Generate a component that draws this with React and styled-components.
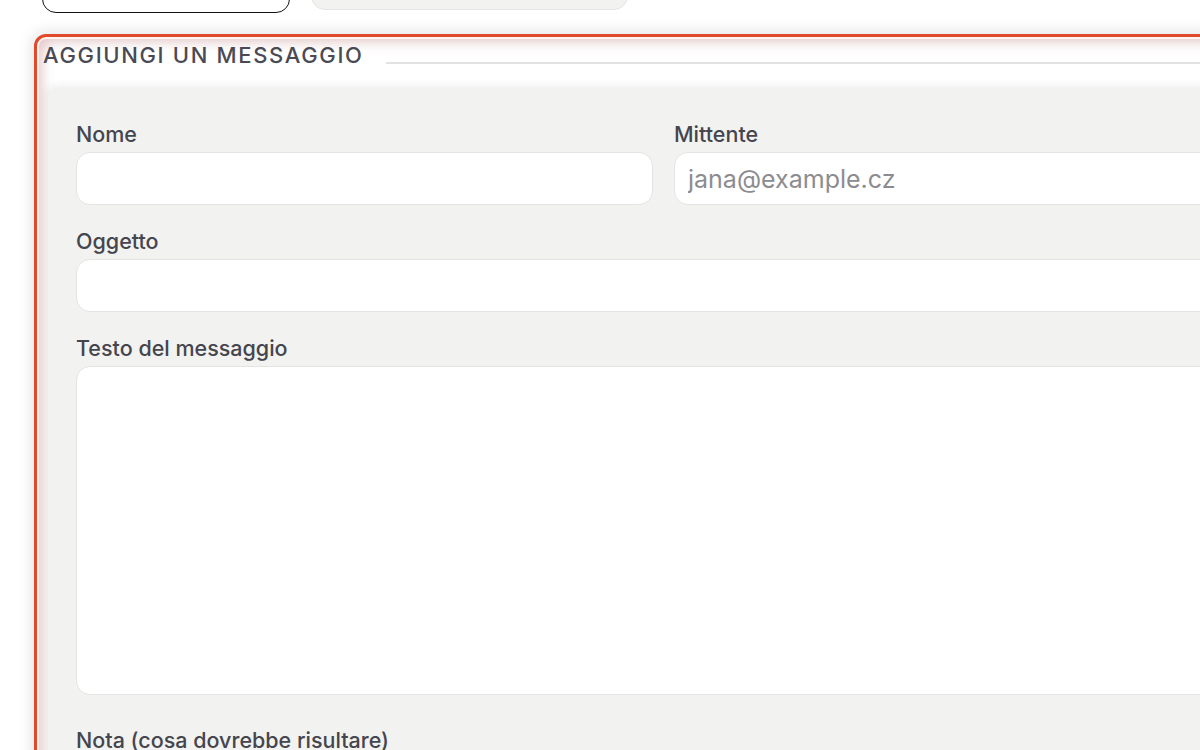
import React from "react";
import styled, { createGlobalStyle } from "styled-components";

const GlobalStyle = createGlobalStyle`
  html, body {
    margin: 0;
    padding: 0;
    background: #ffffff;
    overflow: hidden;
    font-family: Inter, "Noto Sans", sans-serif;
  }
`;

const Page = styled.div`
  width: 1248px;
  padding: 0 0 0 34px;
`;

const Tabs = styled.div`
  display: flex;
  gap: 21px;
  margin: -31px 0 21px 8px;
`;

const Tab = styled.button`
  width: ${(props) => props.width}px;
  height: ${(props) => (props.active ? 44 : 41)}px;
  border-radius: 14px;
  border: ${(props) =>
    props.active ? "1.5px solid #111111" : "1.5px solid #e4e4e2"};
  background: ${(props) => (props.active ? "#ffffff" : "#f2f2f0")};
`;

const Box = styled.section`
  border: 3px solid #e1482c;
  border-radius: 12px;
  background: #ffffff;
  padding: 5px 0 0 6px;
  box-shadow: 0 0 14px 3px rgba(0, 0, 0, 0.1),
    inset 0 0 0 2px #fff4ee,
    inset 9px 9px 12px -4px rgba(190, 120, 120, 0.4);
  height: 800px;
`;

const LegendRow = styled.div`
  display: flex;
  align-items: flex-end;
  gap: 22px;
`;

const Legend = styled.div`
  font-size: 22px;
  line-height: 26px;
  font-weight: 500;
  letter-spacing: 0.075em;
  color: #4a4a54;
  text-transform: uppercase;
  white-space: nowrap;
`;

const Rule = styled.div`
  flex: 1;
  border-bottom: 2px solid #e2e2e0;
  margin-bottom: 4px;
`;

const Panel = styled.div`
  margin: 19px 0 0 5px;
  background: #f2f2f0;
  border-radius: 12px;
  padding: 35px 28px 0 28px;
  box-shadow: -3px -2px 8px rgba(0, 0, 0, 0.06);
  height: 760px;
`;

const Row = styled.div`
  display: grid;
  grid-template-columns: 1fr 1fr;
  gap: 21px;
`;

const Field = styled.div`
  display: flex;
  flex-direction: column;
  margin-bottom: ${(props) => props.spaced ?? 24}px;
`;

const Label = styled.label`
  font-size: 21.5px;
  line-height: 24px;
  font-weight: 500;
  color: #45454e;
  margin-bottom: 6px;
`;

const Input = styled.input`
  box-sizing: border-box;
  height: 53px;
  border: 1.5px solid #e4e4e2;
  border-radius: 14px;
  background: #ffffff;
  padding: 0 13px;
  font-family: Inter, sans-serif;
  font-size: 25px;
  color: #333;
  outline: none;

  &::placeholder {
    color: #8c8c90;
  }
`;

const TextArea = styled.textarea`
  box-sizing: border-box;
  height: 329px;
  border: 1.5px solid #e4e4e2;
  border-radius: 14px;
  background: #ffffff;
  resize: none;
  font-family: Inter, sans-serif;
  font-size: 22px;
  outline: none;
  display: block;
`;

export default function App() {
  return (
    <Page>
      <GlobalStyle />
      <Tabs>
        <Tab active width={248} />
        <Tab width={317} />
      </Tabs>
      <Box>
        <LegendRow>
          <Legend>Aggiungi un messaggio</Legend>
          <Rule />
        </LegendRow>
        <Panel>
          <Row>
            <Field>
              <Label>Nome</Label>
              <Input type="text" />
            </Field>
            <Field>
              <Label>Mittente</Label>
              <Input type="email" placeholder="jana@example.cz" />
            </Field>
          </Row>
          <Field>
            <Label>Oggetto</Label>
            <Input type="text" />
          </Field>
          <Field spaced={33}>
            <Label>Testo del messaggio</Label>
            <TextArea />
          </Field>
          <Field>
            <Label>Nota (cosa dovrebbe risultare)</Label>
          </Field>
        </Panel>
      </Box>
    </Page>
  );
}
